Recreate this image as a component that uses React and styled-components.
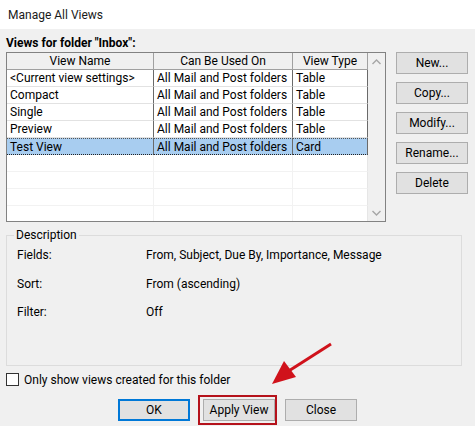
import React from "react";
import styled, { createGlobalStyle } from "styled-components";

const views = [
  { name: "<Current view settings>", usedOn: "All Mail and Post folders", type: "Table" },
  { name: "Compact", usedOn: "All Mail and Post folders", type: "Table" },
  { name: "Single", usedOn: "All Mail and Post folders", type: "Table" },
  { name: "Preview", usedOn: "All Mail and Post folders", type: "Table" },
  { name: "Test View", usedOn: "All Mail and Post folders", type: "Card", selected: true },
];

const description = [
  { label: "Fields:", value: "From, Subject, Due By, Importance, Message" },
  { label: "Sort:", value: "From (ascending)" },
  { label: "Filter:", value: "Off" },
];

const App = () => {
  return (
    <>
      <GlobalStyle />
      <Window>
        <TitleBar>Manage All Views</TitleBar>
        <Body>
          <FolderLabel>Views for folder "Inbox":</FolderLabel>
          <TopRow>
            <ListBox>
              <Table>
                <HeaderCell>View Name</HeaderCell>
                <HeaderCell>Can Be Used On</HeaderCell>
                <HeaderCell>View Type</HeaderCell>
                {views.map((v) => (
                  <Row key={v.name} $selected={v.selected}>
                    <Cell>{v.name}</Cell>
                    <Cell>{v.usedOn}</Cell>
                    <Cell>{v.type}</Cell>
                  </Row>
                ))}
                {[0, 1, 2, 3].map((i) => (
                  <EmptyRow key={i}>
                    <EmptyCell />
                    <EmptyCell />
                    <EmptyCell $last />
                  </EmptyRow>
                ))}
              </Table>
              <ScrollBar>
                <Chevron viewBox="0 0 9 6">
                  <path d="M0.5 5 L4.5 1 L8.5 5" />
                </Chevron>
                <Chevron viewBox="0 0 9 6">
                  <path d="M0.5 1 L4.5 5 L8.5 1" />
                </Chevron>
              </ScrollBar>
            </ListBox>
            <SideButtons>
              <Button>New...</Button>
              <Button>Copy...</Button>
              <Button>Modify...</Button>
              <Button>Rename...</Button>
              <Button>Delete</Button>
            </SideButtons>
          </TopRow>
          <GroupBox>
            <Legend>Description</Legend>
            <DescGrid>
              {description.map((d) => (
                <React.Fragment key={d.label}>
                  <DescLabel>{d.label}</DescLabel>
                  <DescValue>{d.value}</DescValue>
                </React.Fragment>
              ))}
            </DescGrid>
          </GroupBox>
          <CheckRow>
            <CheckBox />
            Only show views created for this folder
          </CheckRow>
          <BottomRow>
            <Button $default>OK</Button>
            <Highlight>
              <Button>Apply View</Button>
            </Highlight>
            <Button>Close</Button>
          </BottomRow>
        </Body>
        <Arrow viewBox="0 0 475 426">
          <line x1="331" y1="344" x2="284" y2="374" stroke="#d0121b" strokeWidth="3" />
          <polygon points="272,384 284,361 296,377" fill="#d0121b" />
        </Arrow>
      </Window>
    </>
  );
};

export default App;

const GlobalStyle = createGlobalStyle`
  body {
    margin: 0;
    background: #f0f0f0;
    font-family: Roboto, "Noto Sans", sans-serif;
    font-size: 12px;
    color: #000;
  }
`;

const Window = styled.div`
  position: relative;
  width: 475px;
  height: 426px;
  background: #f0f0f0;
  overflow: hidden;
`;

const TitleBar = styled.div`
  height: 29px;
  background: #fff;
  padding-left: 8px;
  display: flex;
  align-items: center;
  font-size: 12px;
  color: #1a1a1a;
`;

const Body = styled.div`
  padding: 0 6px;
`;

const FolderLabel = styled.div`
  font-weight: bold;
  height: 23px;
  line-height: 28px;
`;

const TopRow = styled.div`
  display: flex;
  align-items: flex-start;
`;

const ListBox = styled.div`
  width: 378px;
  height: 168px;
  border: 1px solid #828282;
  background: #fff;
  display: flex;
  overflow: hidden;
`;

const Table = styled.div`
  display: grid;
  grid-template-columns: 147px 139px 75px;
  grid-auto-rows: 17px;
  width: 361px;
  align-content: start;
`;

const HeaderCell = styled.div`
  background: #f0f0f0;
  border-right: 1px solid #a0a0a0;
  border-bottom: 1px solid #a0a0a0;
  text-align: center;
  line-height: 16px;
  white-space: nowrap;
`;

const Row = styled.div`
  display: contents;

  & > div {
    background: ${(p) => (p.$selected ? "#a8cdf0" : "#fff")};
    border-bottom: 1px ${(p) => (p.$selected ? "dotted #222" : "solid #e2e2e2")};
    border-top: ${(p) => (p.$selected ? "1px dotted #555" : "none")};
  }
`;

const Cell = styled.div`
  border-right: 1px solid #6a6a6a;
  padding-left: 3px;
  line-height: 16px;
  white-space: nowrap;
  overflow: hidden;
  box-sizing: border-box;
`;

const EmptyRow = styled.div`
  display: contents;
`;

const EmptyCell = styled.div`
  border-right: 1px solid ${(p) => (p.$last ? "#e6e6e6" : "#f2f2f2")};
  border-bottom: 1px solid #f2f2f2;
`;

const ScrollBar = styled.div`
  width: 17px;
  background: #f0f0f0;
  display: flex;
  flex-direction: column;
  justify-content: space-between;
  align-items: center;
  padding: 6px 0 5px;
`;

const Chevron = styled.svg`
  width: 9px;
  height: 6px;
  fill: none;
  stroke: #a6a6a6;
  stroke-width: 1.4;
`;

const SideButtons = styled.div`
  display: flex;
  flex-direction: column;
  gap: 8px;
  margin-left: 10px;
`;

const Button = styled.div`
  width: ${(p) => (p.$default ? "68px" : "70px")};
  height: ${(p) => (p.$default ? "18px" : "20px")};
  background: #e1e1e1;
  border: ${(p) => (p.$default ? "2px solid #0078d7" : "1px solid #adadad")};
  display: flex;
  align-items: center;
  justify-content: center;
  white-space: nowrap;
`;

const GroupBox = styled.fieldset`
  margin: 6px 0 0;
  width: 437px;
  height: 136px;
  border: 1px solid #dcdcdc;
  padding: 0 7px 0 10px;
  box-sizing: content-box;
`;

const Legend = styled.legend`
  padding: 0 2px;
  margin-left: -3px;
  line-height: 14px;
`;

const DescGrid = styled.div`
  display: grid;
  grid-template-columns: 129px 1fr;
  grid-auto-rows: 28.5px;
  padding-top: 5px;
`;

const DescLabel = styled.div`
  line-height: 16px;
`;

const DescValue = styled.div`
  line-height: 16px;
`;

const CheckRow = styled.div`
  display: flex;
  align-items: center;
  gap: 5px;
  margin-top: 6px;
  height: 15px;
`;

const CheckBox = styled.div`
  width: 11px;
  height: 11px;
  border: 1px solid #333;
  background: #fff;
`;

const BottomRow = styled.div`
  display: flex;
  align-items: center;
  margin: 8px 0 0 112px;
  gap: 8px;
`;

const Highlight = styled.div`
  padding: 2px 0 2px 3px;
  border: 2px solid #b5121b;
`;

const Arrow = styled.svg`
  position: absolute;
  left: 0;
  top: 0;
  width: 475px;
  height: 426px;
  pointer-events: none;
`;
